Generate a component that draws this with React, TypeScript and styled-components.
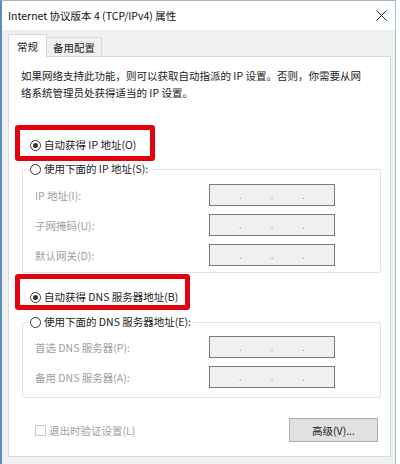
import React from "react";
import styled, { createGlobalStyle } from "styled-components";

const GlobalStyle = createGlobalStyle`
  html, body {
    margin: 0;
    padding: 0;
    background: #ffffff;
  }
  body {
    font-family: "Noto Sans CJK SC", "Liberation Sans", sans-serif;
    font-size: 10.5px;
    color: #1a1a1a;
  }
`;

const Window = styled.div`
  width: 396px;
  height: 464px;
  box-sizing: border-box;
  background: #f0f0f0;
  border-left: 2px solid #5a8dc0;
  border-right: 1px solid #96c8d6;
  border-top: 1px solid #a3b6c2;
  overflow: hidden;
`;

const TitleBar = styled.div`
  height: 29px;
  background: #ffffff;
  display: flex;
  align-items: center;
  justify-content: space-between;
  padding: 0 8px 0 6px;
`;

const Title = styled.span`
  font-size: 10.5px;
  color: #111;
  white-space: nowrap;
`;

const Body = styled.div`
  padding: 4px 4px 0 6px;
`;

const TabRow = styled.div`
  display: flex;
  align-items: flex-end;
  height: 23px;
  margin-bottom: -1px;
  position: relative;
  z-index: 1;
`;

const Tab = styled.div<{ $active?: boolean }>`
  box-sizing: border-box;
  height: ${(p) => (p.$active ? "23px" : "20px")};
  padding: 0 ${(p) => (p.$active ? "8px" : "6px")};
  display: flex;
  align-items: center;
  background: ${(p) => (p.$active ? "#ffffff" : "#f0f0f0")};
  border: 1px solid #d9d9d9;
  border-bottom: ${(p) => (p.$active ? "none" : "1px solid #d9d9d9")};
  margin-left: ${(p) => (p.$active ? "0" : "-1px")};
  white-space: nowrap;
`;

const Panel = styled.div`
  box-sizing: border-box;
  width: 383px;
  height: 401px;
  background: #ffffff;
  border: 1px solid #d9d9d9;
  display: flex;
  flex-direction: column;
  align-items: flex-start;
`;

const Description = styled.p`
  margin: 10px 0 0 12px;
  line-height: 17px;
  width: 350px;
`;

const Highlight = styled.div<{ $width: number; $padTop: number; $gap: number }>`
  box-sizing: border-box;
  width: ${(p) => p.$width}px;
  height: 36px;
  margin: ${(p) => p.$gap}px 0 0 6px;
  border: 5px solid #e3000f;
  border-radius: 3px;
  padding: ${(p) => p.$padTop}px 0 0 10px;
`;

const OptionRow = styled.label`
  display: flex;
  align-items: center;
  gap: 3px;
  height: 16px;
  line-height: 16px;
  white-space: nowrap;
  background: #ffffff;
`;

const RadioDot = styled.span<{ $checked?: boolean }>`
  box-sizing: border-box;
  width: 11px;
  height: 11px;
  border: 1px solid #333333;
  border-radius: 50%;
  display: inline-flex;
  align-items: center;
  justify-content: center;
  &::after {
    content: "";
    display: ${(p) => (p.$checked ? "block" : "none")};
    width: 5px;
    height: 5px;
    border-radius: 50%;
    background: #333333;
  }
`;

const Group = styled.fieldset<{ $gap: number; $padTop: number; $padBottom: number }>`
  box-sizing: border-box;
  width: 359px;
  margin: ${(p) => p.$gap}px 0 0 13px;
  padding: ${(p) => p.$padTop}px 0 ${(p) => p.$padBottom}px 12px;
  border: 1px solid #e3e3e3;
  border-radius: 2px;
  display: flex;
  flex-direction: column;
  gap: 8px;
`;

const Legend = styled.legend`
  padding: 0 2px 0 0;
  margin-left: -5px;
`;

const FieldRow = styled.div`
  display: flex;
  align-items: center;
  height: 22px;
`;

const FieldLabel = styled.span`
  width: 174px;
  color: #a0a0a0;
  white-space: nowrap;
`;

const IpBox = styled.div`
  box-sizing: border-box;
  width: 126px;
  height: 22px;
  background: #f0f0f0;
  border: 1px solid #7a7a7a;
  display: flex;
  align-items: center;
  justify-content: space-evenly;
  color: #8a8a8a;
  font-size: 9px;
`;

const Footer = styled.div`
  box-sizing: border-box;
  width: 100%;
  margin-top: 20px;
  padding: 0 12px 0 26px;
  display: flex;
  align-items: center;
  justify-content: space-between;
`;

const CheckRow = styled.label`
  display: flex;
  align-items: center;
  gap: 3px;
  color: #a0a0a0;
`;

const CheckBox = styled.span`
  box-sizing: border-box;
  width: 11px;
  height: 11px;
  border: 1px solid #c8c8c8;
  background: #ffffff;
`;

const Button = styled.button`
  box-sizing: border-box;
  width: 89px;
  height: 24px;
  background: #e1e1e1;
  border: 1px solid #adadad;
  font-family: inherit;
  font-size: 10.5px;
  color: #1a1a1a;
  padding: 0;
`;

const Radio: React.FC<{ checked?: boolean; text: string }> = ({ checked, text }) => (
  <OptionRow>
    <RadioDot $checked={checked} />
    {text}
  </OptionRow>
);

const IpField = () => (
  <IpBox>
    <span>.</span>
    <span>.</span>
    <span>.</span>
  </IpBox>
);

const CloseIcon = () => (
  <svg width="11" height="11" viewBox="0 0 11 11">
    <path d="M0.5 0.5 L10.5 10.5 M10.5 0.5 L0.5 10.5" stroke="#222" strokeWidth="1" />
  </svg>
);

const ipRows = ["IP 地址(I):", "子网掩码(U):", "默认网关(D):"];
const dnsRows = ["首选 DNS 服务器(P):", "备用 DNS 服务器(A):"];

export default function App() {
  return (
    <>
      <GlobalStyle />
      <Window>
        <TitleBar>
          <Title>Internet 协议版本 4 (TCP/IPv4) 属性</Title>
          <CloseIcon />
        </TitleBar>
        <Body>
          <TabRow>
            <Tab $active>常规</Tab>
            <Tab>备用配置</Tab>
          </TabRow>
          <Panel>
            <Description>
              如果网络支持此功能，则可以获取自动指派的 IP 设置。否则，你需要从网
              <br />
              络系统管理员处获得适当的 IP 设置。
            </Description>

            <Highlight $width={140} $padTop={7} $gap={24}>
              <Radio checked text="自动获得 IP 地址(O)" />
            </Highlight>
            <Group $gap={0} $padTop={7} $padBottom={6}>
              <Legend>
                <Radio text="使用下面的 IP 地址(S):" />
              </Legend>
              {ipRows.map((label) => (
                <FieldRow key={label}>
                  <FieldLabel>{label}</FieldLabel>
                  <IpField />
                </FieldRow>
              ))}
            </Group>

            <Highlight $width={175} $padTop={10} $gap={1}>
              <Radio checked text="自动获得 DNS 服务器地址(B)" />
            </Highlight>
            <Group $gap={4} $padTop={6} $padBottom={9}>
              <Legend>
                <Radio text="使用下面的 DNS 服务器地址(E):" />
              </Legend>
              {dnsRows.map((label) => (
                <FieldRow key={label}>
                  <FieldLabel>{label}</FieldLabel>
                  <IpField />
                </FieldRow>
              ))}
            </Group>

            <Footer>
              <CheckRow>
                <CheckBox />
                退出时验证设置(L)
              </CheckRow>
              <Button>高级(V)...</Button>
            </Footer>
          </Panel>
        </Body>
      </Window>
    </>
  );
}
